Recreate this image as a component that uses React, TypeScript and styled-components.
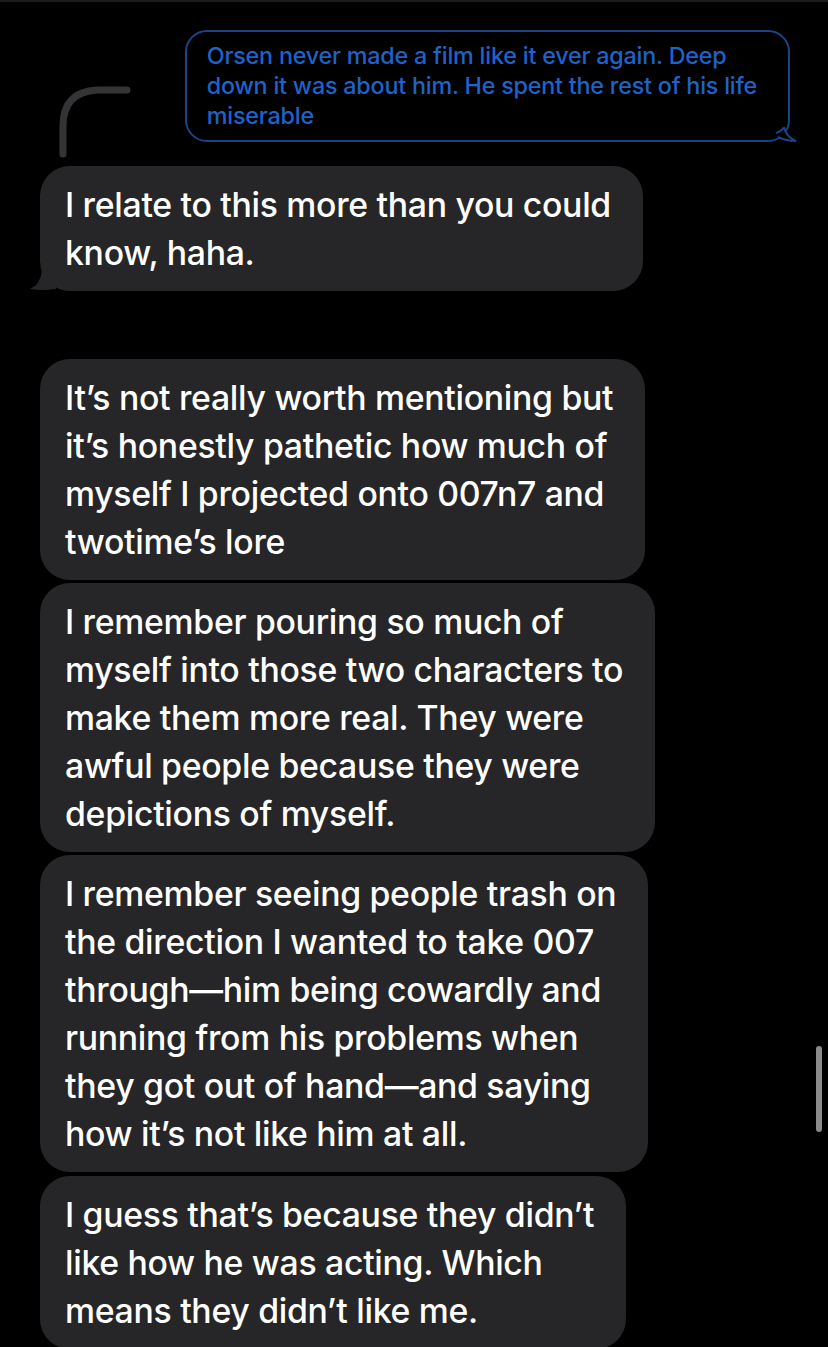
import React from "react";
import styled, { createGlobalStyle } from "styled-components";

const GlobalStyle = createGlobalStyle`
  html, body {
    margin: 0;
    padding: 0;
    background: #000;
  }
  body {
    font-family: "Inter", "Noto Sans", "Liberation Sans", sans-serif;
    -webkit-font-smoothing: antialiased;
  }
`;

interface Message {
  lines: string[];
  tail?: boolean;
  gapBefore: number;
}

const messages: Message[] = [
  {
    lines: ["I relate to this more than you could", "know, haha."],
    tail: true,
    gapBefore: 24,
  },
  {
    lines: [
      "It’s not really worth mentioning but",
      "it’s honestly pathetic how much of",
      "myself I projected onto 007n7 and",
      "twotime’s lore",
    ],
    gapBefore: 68,
  },
  {
    lines: [
      "I remember pouring so much of",
      "myself into those two characters to",
      "make them more real. They were",
      "awful people because they were",
      "depictions of myself.",
    ],
    gapBefore: 3,
  },
  {
    lines: [
      "I remember seeing people trash on",
      "the direction I wanted to take 007",
      "through—him being cowardly and",
      "running from his problems when",
      "they got out of hand—and saying",
      "how it’s not like him at all.",
    ],
    gapBefore: 3,
  },
  {
    lines: [
      "I guess that’s because they didn’t",
      "like how he was acting. Which",
      "means they didn’t like me.",
    ],
    gapBefore: 4,
  },
];

const quoted = [
  "Orsen never made a film like it ever again. Deep",
  "down it was about him. He spent the rest of his life",
  "miserable",
];

export default function App() {
  return (
    <>
      <GlobalStyle />
      <Screen>
        <ReplyRow>
          <Connector width="80" height="76" viewBox="0 0 80 76">
            <path
              d="M8 70 L8 42 Q8 8 42 6 L72 6"
              fill="none"
              stroke="#343436"
              strokeWidth="7"
              strokeLinecap="round"
            />
          </Connector>
          <QuoteBubble>
            {quoted.map((l) => (
              <Line key={l}>{l}</Line>
            ))}
            <QuoteTail width="22" height="16" viewBox="0 0 22 16">
              <path
                d="M0 6 Q6 4 8 0 L8 0 Q10 10 20 14 Q10 14 2 10"
                fill="#000"
                stroke="#1c4386"
                strokeWidth="2"
              />
            </QuoteTail>
          </QuoteBubble>
        </ReplyRow>

        {messages.map((m, i) => (
          <Bubble key={i} $gap={m.gapBefore}>
            {m.lines.map((l) => (
              <Line key={l}>{l}</Line>
            ))}
            {m.tail && (
              <Tail width="26" height="20" viewBox="0 0 26 20">
                <path d="M26 0 L26 18 Q12 20 0 18 Q10 14 12 0 Z" fill="#262628" />
              </Tail>
            )}
          </Bubble>
        ))}

        <ScrollThumb />
      </Screen>
    </>
  );
}

const Screen = styled.div`
  position: relative;
  width: 828px;
  height: 1347px;
  overflow: hidden;
  background: #000;
  border-top: 2px solid #1c1c1e;
  box-sizing: border-box;
  padding-top: 28px;
  display: flex;
  flex-direction: column;
  align-items: flex-start;
`;

const ReplyRow = styled.div`
  width: 100%;
  display: flex;
  justify-content: space-between;
  align-items: flex-end;
  padding: 0 38px 0 55px;
  box-sizing: border-box;
`;

const Connector = styled.svg`
  display: block;
  margin-bottom: -18px;
`;

const QuoteBubble = styled.div`
  position: relative;
  border: 2px solid #1c4386;
  border-radius: 22px;
  padding: 9px 31px 9px 20px;
  font-size: 23.3px;
  font-weight: 500;
  line-height: 30px;
  color: #1f62c9;
  letter-spacing: -0.2px;
`;

const QuoteTail = styled.svg`
  position: absolute;
  right: -10px;
  bottom: -3px;
`;

const Bubble = styled.div<{ $gap: number }>`
  position: relative;
  margin: ${({ $gap }) => $gap}px 0 0 40px;
  background: #262628;
  border-radius: 30px;
  padding: 14.5px 32px 14.5px 25px;
  font-size: 33.8px;
  font-weight: 500;
  line-height: 48px;
  color: #fff;
  letter-spacing: -0.3px;
`;

const Line = styled.div`
  white-space: nowrap;
`;

const Tail = styled.svg`
  position: absolute;
  left: -10px;
  bottom: 0;
`;

const ScrollThumb = styled.div`
  position: absolute;
  right: 6px;
  top: 1044px;
  width: 6px;
  height: 86px;
  border-radius: 3px;
  background: #8a8a8a;
`;
